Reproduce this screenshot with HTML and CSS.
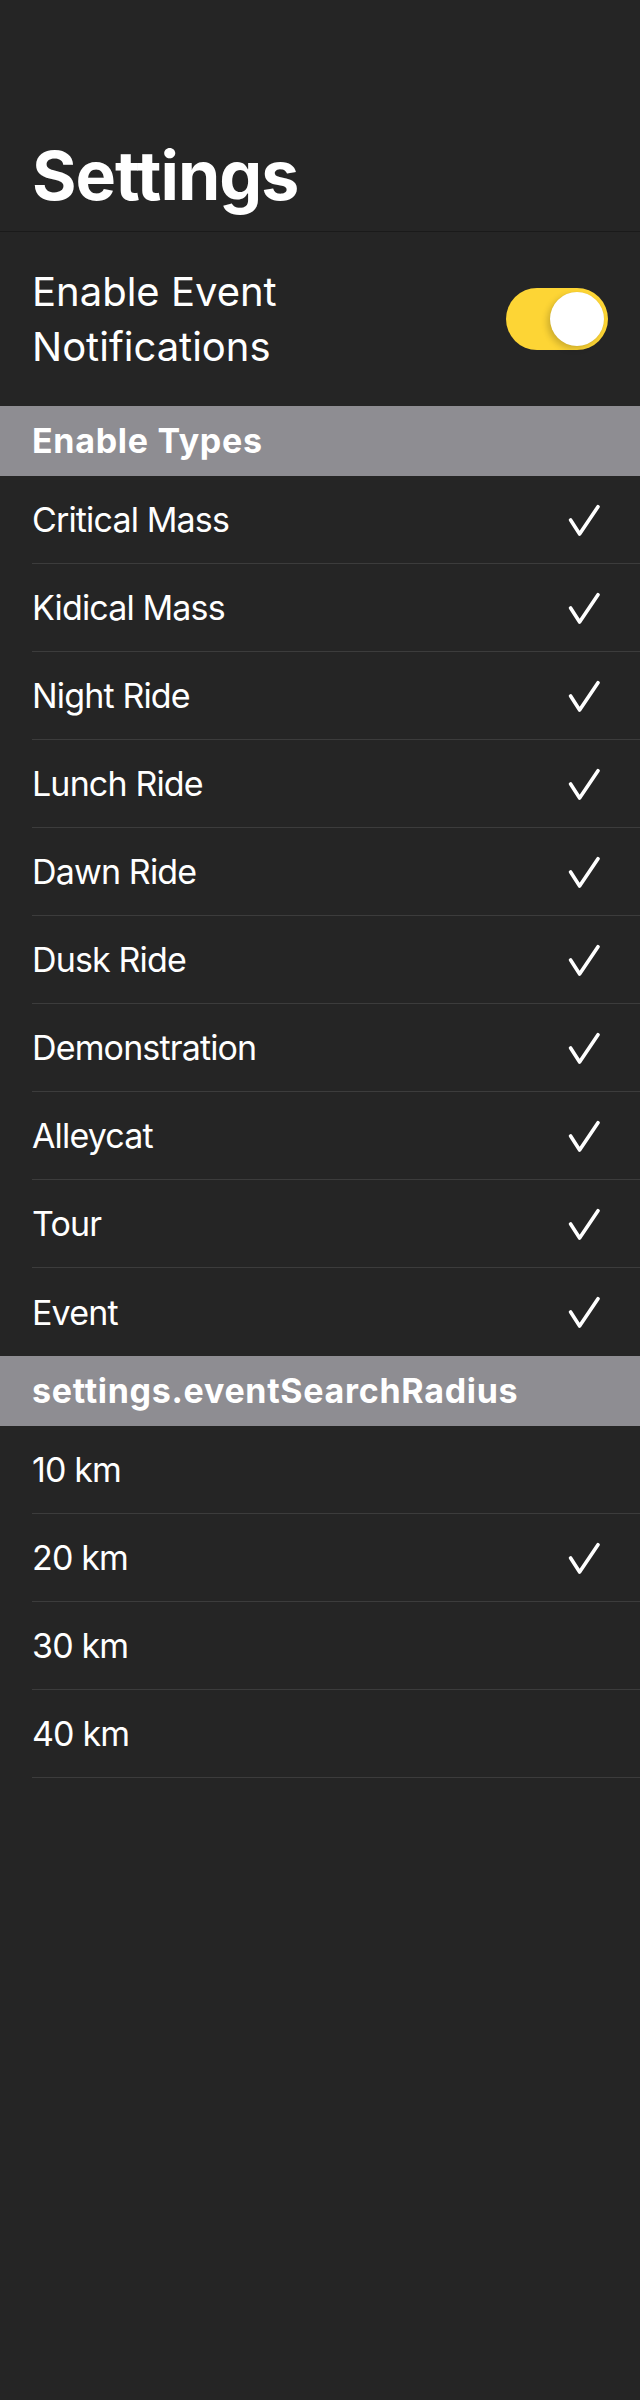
FILE: index.html
```html
<!DOCTYPE html>
<html>
<head>
<meta charset="utf-8">
<link rel="stylesheet" href="styles.css">
</head>
<body>
<div class="screen">
  <header class="nav">
    <h1 class="title">Settings</h1>
  </header>

  <div class="toggle-row">
    <div class="toggle-label">Enable Event<br>Notifications</div>
    <div class="switch"><div class="knob"></div></div>
  </div>

  <div class="section-header">Enable Types</div>
  <ul class="list">
    <li class="row"><span class="label">Critical Mass</span><svg class="check" viewBox="0 0 32 32"><path d="M2.6 16 L11.6 30 L30 2.7"/></svg></li>
    <li class="row"><span class="label">Kidical Mass</span><svg class="check" viewBox="0 0 32 32"><path d="M2.6 16 L11.6 30 L30 2.7"/></svg></li>
    <li class="row"><span class="label">Night Ride</span><svg class="check" viewBox="0 0 32 32"><path d="M2.6 16 L11.6 30 L30 2.7"/></svg></li>
    <li class="row"><span class="label">Lunch Ride</span><svg class="check" viewBox="0 0 32 32"><path d="M2.6 16 L11.6 30 L30 2.7"/></svg></li>
    <li class="row"><span class="label">Dawn Ride</span><svg class="check" viewBox="0 0 32 32"><path d="M2.6 16 L11.6 30 L30 2.7"/></svg></li>
    <li class="row"><span class="label">Dusk Ride</span><svg class="check" viewBox="0 0 32 32"><path d="M2.6 16 L11.6 30 L30 2.7"/></svg></li>
    <li class="row"><span class="label">Demonstration</span><svg class="check" viewBox="0 0 32 32"><path d="M2.6 16 L11.6 30 L30 2.7"/></svg></li>
    <li class="row"><span class="label">Alleycat</span><svg class="check" viewBox="0 0 32 32"><path d="M2.6 16 L11.6 30 L30 2.7"/></svg></li>
    <li class="row"><span class="label">Tour</span><svg class="check" viewBox="0 0 32 32"><path d="M2.6 16 L11.6 30 L30 2.7"/></svg></li>
    <li class="row last"><span class="label">Event</span><svg class="check" viewBox="0 0 32 32"><path d="M2.6 16 L11.6 30 L30 2.7"/></svg></li>
  </ul>

  <div class="section-header">settings.eventSearchRadius</div>
  <ul class="list">
    <li class="row"><span class="label">10 km</span></li>
    <li class="row"><span class="label">20 km</span><svg class="check" viewBox="0 0 32 32"><path d="M2.6 16 L11.6 30 L30 2.7"/></svg></li>
    <li class="row"><span class="label">30 km</span></li>
    <li class="row"><span class="label">40 km</span></li>
  </ul>
</div>
</body>
</html>
```

FILE: styles.css
```css
html, body {
  margin: 0;
  padding: 0;
  background: #252525;
}

body {
  font-family: Inter, "Noto Sans", "Liberation Sans", sans-serif;
  color: #ffffff;
}

.screen {
  width: 640px;
  min-height: 2400px;
  background: #252525;
}

.nav {
  padding: 135px 32px 16px 32px;
  border-bottom: 1px solid #1a1a1a;
}

.title {
  margin: 0;
  font-size: 68px;
  line-height: 80px;
  font-weight: 700;
  letter-spacing: -1px;
}

.toggle-row {
  display: flex;
  align-items: center;
  justify-content: space-between;
  height: 174px;
  padding: 0 32px;
  box-sizing: border-box;
}

.toggle-label {
  font-size: 40px;
  line-height: 55px;
  font-weight: 400;
}

.switch {
  position: relative;
  width: 102px;
  height: 62px;
  border-radius: 31px;
  background: #fdd535;
}

.knob {
  position: absolute;
  top: 4px;
  right: 4px;
  width: 54px;
  height: 54px;
  border-radius: 50%;
  background: #ffffff;
  box-shadow: -3px 3px 6px rgba(0, 0, 0, 0.18), 0 0 1px rgba(0, 0, 0, 0.1);
}

.section-header {
  height: 70px;
  line-height: 70px;
  padding: 0 32px;
  background: #8e8d92;
  font-size: 34px;
  font-weight: 700;
  letter-spacing: 0.7px;
}

.list {
  list-style: none;
  margin: 0;
  padding: 0;
}

.row {
  display: flex;
  align-items: center;
  justify-content: space-between;
  height: 88px;
  box-sizing: border-box;
  margin-left: 32px;
  padding-right: 40px;
  border-bottom: 1px solid #3c3c3c;
}

.row.last {
  border-bottom: none;
}

.label {
  font-size: 34px;
  line-height: 87px;
  font-weight: 400;
  letter-spacing: -0.85px;
}

.check {
  width: 32px;
  height: 32px;
  fill: none;
  stroke: #ffffff;
  stroke-width: 3.6;
  stroke-linecap: round;
  stroke-linejoin: round;
}
```
